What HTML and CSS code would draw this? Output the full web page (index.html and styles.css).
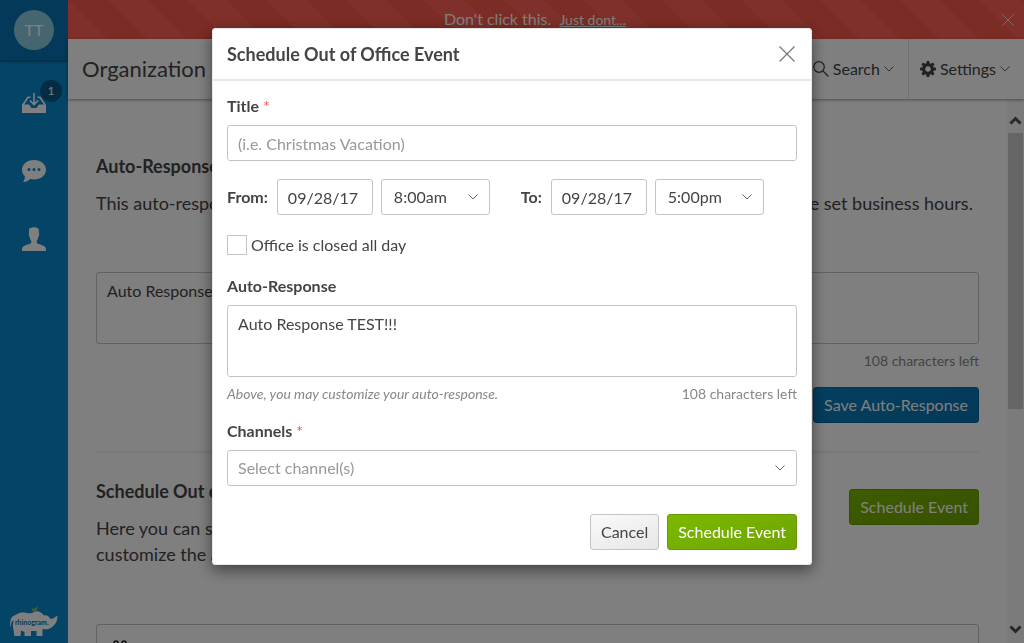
FILE: index.html
```html
<!DOCTYPE html>
<html lang="en">
<head>
<meta charset="utf-8">
<title>Organization</title>
<link rel="stylesheet" href="styles.css">
</head>
<body>
<div class="app">
  <nav class="sidebar" aria-label="Main">
    <div class="profile"><button class="avatar" type="button">TT</button></div>
    <div class="nav">
      <a class="nav-item" href="#" aria-label="Inbox">
        <span class="nav-icon">
          <svg width="24" height="20" viewBox="0 0 24 20" fill="none" stroke="#fff"><path d="M0 11.500H7L9.500 15H14.500L17 11.500H24V20H0Z" fill="#fff" stroke="none"/><path d="M.8 12 6 4.200H8.500M23.200 12 18 4.200H15.500" stroke-width="1.600"/><path d="M12 0V11M8 7.500 12 11.500 16 7.500" stroke-width="1.600"/></svg>
          <span class="badge">1</span>
        </span>
      </a>
      <a class="nav-item" href="#" aria-label="Messages">
        <svg width="24" height="24" viewBox="0 0 24 24"><path d="M12 1C18.600 1 24 5.200 24 10.700S18.600 20.500 12 20.500C10.700 20.500 9.400 20.300 8.200 20 6.300 21.700 3.800 23 1 23 2.300 21.500 2.900 19.800 2.900 17.300 1.100 15.600 0 13.300 0 10.700 0 5.200 5.400 1 12 1Z" fill="#fff"/><g fill="#0889ce"><circle cx="7" cy="10.500" r="1.500"/><circle cx="12" cy="10.500" r="1.500"/><circle cx="17" cy="10.500" r="1.500"/></g></svg>
      </a>
      <a class="nav-item" href="#" aria-label="Contacts">
        <svg width="24" height="24" viewBox="0 0 24 24"><path d="M7 2C8.500 0 15 -.6 16.700 2L17 7C17.400 7.500 17.200 9 16.500 9.500 16.200 11.500 15.500 12.800 14.800 13.700V16C16 17.600 24 17.500 24 22.500V24H0V22.500C0 17.500 8 17.600 9.200 16V13.700C8.500 12.800 7.800 11.500 7.500 9.500 6.800 9 6.600 7.500 7 7Z" fill="#fff"/></svg>
      </a>
    </div>
    <a class="logo" href="#">
      <svg width="50" height="32" viewBox="0 0 50 32" role="img"><path d="M2 23C.2 17 1.500 11 7 9.800 13 5 18 9 23 8 28 4.500 32 7 35 10.500 38 9.500 40 11.500 41 13.500 44 14.500 46.500 12 48.300 10.500 49 16 46 20 42.500 22.500 40 24.500 36.500 24.500 33.500 24V31H27.500V26H22V31H15.500V27L12 25.500 11.500 31H5.500L4.500 25C3.500 22 4 18 4.500 15 1.500 17 2.300 20 2 23Z" fill="#fff"/><path d="M22.500 3.500 26 3.800 28 1 28.500 3C28 5.500 26.500 6.500 24.500 6.500L25 9" fill="#9bc53d"/><path d="M38 14.500 37 11.500 39 12Z" fill="#fff"/><text class="logo-text" x="6" y="20">rhinogram.</text></svg>
    </a>
  </nav>

  <div class="page">
    <div class="banner">
      <p class="banner-message">Don't click this. <a class="banner-link" href="#">Just dont...</a></p>
      <button class="icon-button" type="button" aria-label="Dismiss"><svg width="12" height="12" viewBox="0 0 12 12" fill="none" stroke="#fcc" stroke-width="1"><path d="M0 0 12 12M12 0 0 12"/></svg></button>
    </div>
    <header class="topbar">
      <h1 class="topbar-title">Organization</h1>
      <button class="topbar-item" type="button">
        <svg width="16" height="16" viewBox="0 0 16 16" fill="none" stroke="#444" stroke-width="1.300"><circle cx="6" cy="6" r="5.300"/><path d="M10 10 15.500 15.500"/></svg>
        Search
        <svg class="caret" width="10" height="6" viewBox="0 0 10 6"><path d="M.5.500 5 5 9.500.500"/></svg>
      </button>
      <button class="topbar-item" type="button">
        <svg width="16" height="16" viewBox="-8 -8 16 16"><g fill="#444"><circle r="5.900"/><path id="tooth" d="M-1.700-5 -1.300-8H1.300L1.700-5ZM-1.700 5 -1.300 8H1.300L1.700 5Z"/><use href="#tooth" transform="rotate(45)"/><use href="#tooth" transform="rotate(90)"/><use href="#tooth" transform="rotate(135)"/></g><circle r="2.700" fill="#fff"/></svg>
        Settings
        <svg class="caret" width="10" height="6" viewBox="0 0 10 6"><path d="M.5.500 5 5 9.500.500"/></svg>
      </button>
    </header>
    <div class="scroller">
      <main class="content">
        <section class="section">
          <h2 class="section-title">Auto-Response</h2>
          <p class="lead">This auto-response message will be sent to anyone who messages your organization outside set business hours.</p>
          <textarea class="field area page-area" aria-label="Auto-Response message">Auto Response TEST!!!</textarea>
          <p class="count">108 characters left</p>
          <button class="button button-blue" type="button">Save Auto-Response</button>
        </section>
        <section class="section schedule">
          <div class="schedule-text">
            <h2 class="section-title">Schedule Out of Office Event</h2>
            <p class="lead">Here you can schedule out of office events for your organization and customize the auto-response for each of them.</p>
          </div>
          <button class="button button-green" type="button">Schedule Event</button>
        </section>
        <div class="event-list"><svg width="14" height="14" viewBox="0 0 14 14" fill="none" stroke="#222" stroke-width="1.500"><circle cx="3" cy="3" r="2"/><circle cx="11" cy="3" r="2"/></svg></div>
      </main>
      <div class="scrollbar" aria-hidden="true">
        <svg width="13" height="9" viewBox="0 0 13 9"><path d="M1.500 7.500 6.500 2.500 11.500 7.500"/></svg>
        <div class="track"><div class="thumb"></div></div>
        <svg width="13" height="9" viewBox="0 0 13 9"><path d="M1.500 1.500 6.500 6.500 11.500 1.500"/></svg>
      </div>
    </div>
  </div>
</div>

<div class="overlay">
  <form class="modal" role="dialog" aria-modal="true" aria-labelledby="dialog-title">
    <div class="modal-header">
      <h2 class="modal-title" id="dialog-title">Schedule Out of Office Event</h2>
      <button class="icon-button" type="button" aria-label="Close"><svg width="16" height="16" viewBox="0 0 16 16" fill="none" stroke="#777" stroke-width="1.200"><path d="M.5.500 15.500 15.500M15.500.500.500 15.500"/></svg></button>
    </div>
    <div class="modal-body">
      <label class="label" for="title">Title <span class="required">*</span></label>
      <input class="field" id="title" type="text" placeholder="(i.e. Christmas Vacation)">
      <div class="range">
        <div class="range-group">
          <label class="label-inline" for="from-date">From:</label>
          <input class="field date" id="from-date" type="text" value="09/28/17">
          <div class="select time">
            <select class="field" aria-label="From time"><option>8:00am</option></select>
            <svg class="caret" width="10" height="6" viewBox="0 0 10 6"><path d="M.5.500 5 5 9.500.500"/></svg>
          </div>
        </div>
        <div class="range-group">
          <label class="label-inline" for="to-date">To:</label>
          <input class="field date" id="to-date" type="text" value="09/28/17">
          <div class="select time">
            <select class="field" aria-label="To time"><option>5:00pm</option></select>
            <svg class="caret" width="10" height="6" viewBox="0 0 10 6"><path d="M.5.500 5 5 9.500.500"/></svg>
          </div>
        </div>
      </div>
      <label class="check"><input class="checkbox" type="checkbox">Office is closed all day</label>
      <label class="label" for="response">Auto-Response</label>
      <textarea class="field area" id="response">Auto Response TEST!!!</textarea>
      <div class="hints"><em>Above, you may customize your auto-response.</em><span>108 characters left</span></div>
      <label class="label" for="channels">Channels <span class="required">*</span></label>
      <div class="select">
        <select class="field placeholder" id="channels"><option>Select channel(s)</option></select>
        <svg class="caret" width="10" height="6" viewBox="0 0 10 6"><path d="M.5.500 5 5 9.500.500"/></svg>
      </div>
      <div class="actions">
        <button class="button button-plain" type="button">Cancel</button>
        <button class="button button-green" type="submit">Schedule Event</button>
      </div>
    </div>
  </form>
</div>
</body>
</html>
```
FILE: styles.css
```css
* { box-sizing: border-box; }
body, h1, h2, p { margin: 0; }
body, button, input, select, textarea {
  font-family: Lato, "Open Sans", sans-serif;
  font-size: 16px;
  line-height: 20px;
  color: #444;
}
svg { display: block; flex: none; }
button { cursor: pointer; }

.app {
  display: flex;
  height: 100vh;
  overflow: hidden;
  background: #fff;
}

.sidebar {
  display: flex;
  flex-direction: column;
  flex: none;
  width: 68px;
  background: #0889ce;
}
.profile {
  padding: 10px 14px;
  background: #0872b2;
  box-shadow: 0 1px 3px rgba(0, 0, 0, .5);
}
.avatar {
  display: block;
  width: 40px;
  height: 40px;
  padding: 0;
  border: 0;
  border-radius: 50%;
  background: #8accdc;
  color: #fff;
}
.nav { flex: 1; padding-top: 9px; }
.nav-item {
  display: flex;
  align-items: center;
  justify-content: center;
  height: 68px;
}
.nav-icon { position: relative; }
.badge {
  position: absolute;
  left: 18px;
  top: -13px;
  width: 22px;
  border-radius: 50%;
  background: #085a87;
  color: #fff;
  font-size: 12px;
  line-height: 22px;
  text-align: center;
}
.logo { padding: 0 9px 6px; }
.logo-text {
  fill: #0872b2;
  font-family: Lato, sans-serif;
  font-size: 7px;
  font-weight: bold;
}

.page {
  display: flex;
  flex-direction: column;
  flex: 1;
  min-width: 0;
}
.banner {
  display: flex;
  align-items: center;
  flex: none;
  height: 39px;
  padding-right: 10px;
  background: repeating-linear-gradient(45deg, #fe6054 0 28px, #f65848 28px 56px);
  color: #fff;
}
.banner-message { flex: 1; text-align: center; }
.banner-link { margin-left: 4px; color: #fff; font-size: 14px; }
.icon-button {
  padding: 0;
  border: 0;
  background: none;
}
.topbar {
  display: flex;
  flex: none;
  height: 60px;
  background: #fff;
  box-shadow: 0 1px 3px rgba(0, 0, 0, .4);
  z-index: 1;
}
.topbar-title {
  flex: 1;
  padding-left: 14px;
  font-size: 22px;
  font-weight: 400;
  line-height: 60px;
}
.topbar-item {
  display: flex;
  align-items: center;
  gap: 4px;
  padding: 0 14px 0 11px;
  border: 0;
  border-left: 1px solid #e0e0e0;
  background: none;
}
.caret { fill: none; stroke: #666; stroke-width: 1; }

.scroller { display: flex; flex: 1; min-height: 0; }
.content {
  flex: 1;
  min-width: 0;
  padding: 54px 28px 0;
  overflow: hidden;
}
.section-title { font-size: 18px; line-height: 26px; }
.section { display: flow-root; }
.lead { margin-top: 11px; font-size: 18px; line-height: 26px; }
.count {
  margin: 7px 0 16px;
  color: #888;
  font-size: 14px;
  text-align: right;
}
.button-blue { float: right; }
.schedule {
  display: flex;
  align-items: flex-start;
  justify-content: space-between;
  margin-top: 28px;
  padding-top: 25px;
  border-top: 2px solid #f2f2f2;
}
.schedule .button { margin-top: 11px; }
.schedule-text { max-width: 600px; }
.event-list {
  height: 80px;
  margin-top: 57px;
  padding: 15px 16px;
  border: 1px solid #c4c4c4;
  border-radius: 3px;
}
.scrollbar {
  display: flex;
  flex-direction: column;
  align-items: center;
  gap: 8px;
  width: 17px;
  padding: 17px 0 9px;
  background: #f6f6f6;
}
.scrollbar path { fill: none; stroke: #505050; stroke-width: 3; }
.track { flex: 1; }
.thumb { width: 15px; height: 57%; background: #cdcdcd; }

.field {
  display: block;
  width: 100%;
  height: 36px;
  margin: 0;
  padding: 0 10px;
  border: 1px solid #c4c4c4;
  border-radius: 3px;
  background: #fff;
  appearance: none;
  outline: none;
}
.field::placeholder, .placeholder { color: #999; opacity: 1; }
textarea.area { height: 72px; padding: 8px 10px; resize: none; }
textarea.page-area { margin-top: 56px; }

.button {
  height: 36px;
  padding: 0 10px;
  border: 1px solid;
  border-radius: 3px;
  color: #fff;
  white-space: nowrap;
}
.button-blue { border-color: #0668a4; background: linear-gradient(160deg, #087fc0, #0872b0); }
.button-green { border-color: #659c00; background: linear-gradient(160deg, #7cb900, #6ea400); }
.button-plain { border-color: #c4c4c4; background: linear-gradient(160deg, #fafafa, #e6e6e6); color: #444; }

.overlay {
  position: fixed;
  inset: 0;
  z-index: 10;
  display: flex;
  align-items: flex-start;
  justify-content: center;
  padding-top: 28px;
  background: rgba(0, 0, 0, .5);
}
.modal {
  width: 600px;
  max-width: 100%;
  border: 1px solid #e6e6e6;
  border-radius: 3px;
  background: #fff;
  box-shadow: 0 5px 15px rgba(0, 0, 0, .5);
}
.modal-header {
  display: flex;
  align-items: center;
  justify-content: space-between;
  padding: 12px 16px 12px 14px;
  border-bottom: 2px solid #e8e8e8;
}
.modal-title { font-size: 18px; line-height: 26px; }
.modal-body { padding: 15px 14px 14px; }
.label { display: block; margin-bottom: 9px; font-weight: bold; }
.label-inline { margin-right: 1px; font-weight: bold; }
.required { color: #f65848; font-weight: 400; }
.range { display: flex; gap: 31px; margin: 18px 0 20px; }
.range-group { display: flex; align-items: center; gap: 8px; }
.date { width: 96px; }
.select { position: relative; }
.time { width: 109px; }
.time .field { padding-left: 12px; }
.select .caret {
  position: absolute;
  right: 12px;
  top: 15px;
  pointer-events: none;
}
.check { display: flex; gap: 4px; margin-bottom: 21px; }
.checkbox {
  width: 20px;
  height: 20px;
  margin: 0;
  border: 1px solid #c4c4c4;
  background: #fff;
  appearance: none;
}
.hints {
  display: flex;
  justify-content: space-between;
  margin: 7px 0 17px;
  color: #888;
  font-size: 14px;
}
.actions {
  display: flex;
  justify-content: flex-end;
  gap: 8px;
  margin-top: 28px;
}
```
